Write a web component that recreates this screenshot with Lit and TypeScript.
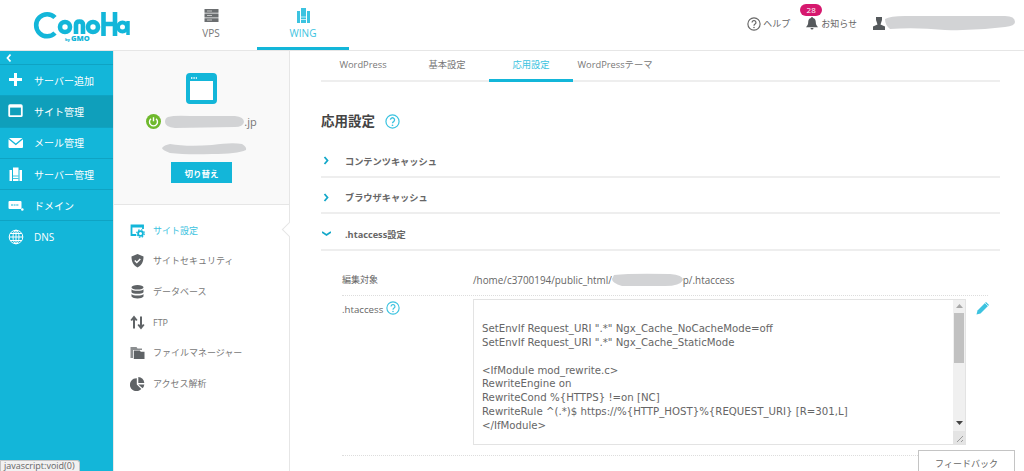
import { LitElement, html, css, svg } from "lit";
import { customElement } from "lit/decorators.js";

const blob = (w: number, h: number, d: string) => html`<svg class="blob" width=${w} height=${h} viewBox="0 0 ${w} ${h}"><path d=${d} fill="#d2d3d5"/></svg>`;

const helpIcon = (s: number, c: string) => html`<svg width=${s} height=${s} viewBox="0 0 16 16" fill="none"><circle cx="8" cy="8" r="7" stroke=${c} stroke-width="1.3"/><path d="M5.8 6.2a2.2 2.2 0 1 1 3.4 1.9c-.8.5-1.2.9-1.2 1.8" stroke=${c} stroke-width="1.4"/><circle cx="8" cy="12" r=".9" fill=${c}/></svg>`;

const sideItems = [
  { t: "サーバー追加", i: svg`<path d="M6 1h3v5h5v3H9v5H6V9H1V6h5z" fill="#fff"/>` },
  { t: "サイト管理", active: true, i: svg`<rect x="1.2" y="2.2" width="12.6" height="11" rx=".8" fill="none" stroke="#fff" stroke-width="1.8"/><rect x="1" y="2" width="13" height="2.6" fill="#fff"/>` },
  { t: "メール管理", i: svg`<path d="M1 3h13.5L7.8 8.5zM.5 4.2l7.3 6 7.2-6V12a1 1 0 0 1-1 1H1.500a1 1 0 0 1-1-1z" fill="#fff"/>` },
  { t: "サーバー管理", i: svg`<path d="M5 1.500h5.500V15H5zM1.500 4H4v11H1.500zM11.500 4H14v11h-2.500z" fill="#fff"/><path d="M5 10h5.500M5 12.500h5.500" stroke="#13b6d9" stroke-width=".8"/>` },
  { t: "ドメイン", i: svg`<rect x=".5" y="4" width="13" height="8" rx="1" fill="#fff"/><circle cx="14.300" cy="12.500" r="1.300" fill="#fff"/><path d="M3 8h8" stroke="#13b6d9" stroke-width="1.200" stroke-dasharray="2 .6"/>` },
  { t: "DNS", i: svg`<g fill="none" stroke="#fff" stroke-width="1"><circle cx="8" cy="8" r="6.800"/><ellipse cx="8" cy="8" rx="3" ry="6.800"/><path d="M8 1.200v13.600M1.200 8h13.600M2.200 4.500h11.600M2.200 11.500h11.600"/></g>` },
];

const g = "#5f6366";
const menu = [
  { t: "サイト設定", active: true, i: svg`<path d="M6 12H1.500V2.500h11.500V6" fill="none" stroke="#13b6d9" stroke-width="1.800"/><rect x="1" y="2" width="12.500" height="2.500" fill="#13b6d9"/><circle cx="10.500" cy="10.500" r="2.400" fill="none" stroke="#13b6d9" stroke-width="1.800"/><circle cx="10.500" cy="10.500" r="3.800" fill="none" stroke="#13b6d9" stroke-width="1.200" stroke-dasharray="1.500 1.500"/>` },
  { t: "サイトセキュリティ", i: svg`<path d="M7.500 1l6 2.500c0 5-1.500 8.500-6 11-4.500-2.500-6-6-6-11z" fill="${g}"/><path d="M4.800 7.500l2 2 3.500-3.500" fill="none" stroke="#fff" stroke-width="1.500"/>` },
  { t: "データベース", i: svg`<ellipse cx="7.500" cy="3.300" rx="6" ry="2.300" fill="${g}"/><path d="M1.500 5.200c1.500 2 10.500 2 12 0v3c-1.500 2-10.500 2-12 0zM1.500 10c1.500 2 10.500 2 12 0v2.500c-1.500 2.500-10.500 2.500-12 0z" fill="${g}"/>` },
  { t: "FTP", i: svg`<path d="M4 13.500V3M1.200 5.500L4 2l2.800 3.500M11 1.500V12M8.200 9.500L11 13l2.800-3.500" fill="none" stroke="${g}" stroke-width="2"/>` },
  { t: "ファイルマネージャー", i: svg`<path d="M.5 2h6l1 1.500H12V5H3v8H.5z" fill="#8b8e90"/><path d="M3.800 5.500h6l1 1.300h3.700V14H3.800z" fill="${g}"/>` },
  { t: "アクセス解析", i: svg`<path d="M6.800 2.200v6.300l4.500 4.500A6.500 6.500 0 1 1 6.800 2.200z" fill="${g}"/><path d="M8.300 1a6.300 6.300 0 0 1 6 6H8.300z" fill="${g}"/><path d="M8.300 8.500h6a6.300 6.300 0 0 1-1.800 3.800z" fill="${g}"/>` },
];

@customElement("app-root")
export class AppRoot extends LitElement {
  static styles = css`
    :host { display: block; width: 1024px; height: 471px; overflow: hidden; position: relative; background: #fff;
      font-family: "Open Sans", "Noto Sans CJK JP", sans-serif; color: #666; font-size: 10px; }
    svg { display: block; flex: none; }
    .hdr { height: 51px; box-sizing: border-box; border-bottom: 1px solid #e6e6e6; display: flex; align-items: stretch; }
    .logo { margin: 10px 0 0 33px; width: 97px; height: 34px; }
    .topnav { display: flex; margin-left: 35px; }
    .tn { width: 92px; height: 50px; box-sizing: border-box; display: flex; flex-direction: column; align-items: center; padding-top: 8px; gap: 3px; font-size: 10px; color: #777; }
    .tn.on { color: #3cc3e0; border-bottom: 3px solid #13b6d9; }
    .right { margin-left: auto; display: flex; align-items: center; padding: 0 9px 3px 0; position: relative; }
    .right span { font-size: 9px; color: #666; }
    .help { display: flex; align-items: center; gap: 2px; margin-right: 16px; }
    .bell { display: flex; align-items: center; gap: 3px; margin-right: 16px; position: relative; }
    .right .badge { position: absolute; left: -6px; top: -13px; width: 22px; height: 12px; border-radius: 6px; background: #d6186e; color: #fff; font-size: 8px; line-height: 12px; text-align: center; }
    .user { display: flex; align-items: center; }
    .body { display: flex; height: 420px; }
    .side { width: 114px; box-sizing: border-box; background: #13b6d9; border-right: 1px solid #e8e8e8; flex: none; color: #fff; }
    .collapse { height: 14px; box-sizing: border-box; border-bottom: 1px solid #0fa3c3; padding: 2px 0 0 6px; }
    .si { height: 31.300px; box-sizing: border-box; border-bottom: 1px solid #0fa3c3; display: flex; align-items: center; padding-left: 8px; gap: 10px; font-size: 10px; color: #fff; }
    .si.on { background: #0f9fbb; }
    .si svg { width: 16px; height: 16px; }
    .si.last { border-bottom: none; }
    .panel { width: 176px; box-sizing: border-box; flex: none; border-right: 1px solid #e6e6e6; position: relative; }
    .ptop { height: 154px; background: #f9f9f9; border-bottom: 1px solid #e6e6e6; display: flex; flex-direction: column; align-items: center; padding-top: 22px; box-sizing: border-box; }
    .sitename { display: flex; align-items: center; margin-top: 10px; font-size: 11px; color: #777; height: 15px; }
    .sitename .blob { margin: 0 0 0 4px; }
    .blob2 { margin: 13px 0 0 5px; }
    .sw { margin-top: 7px; width: 61px; height: 21px; background: #13b6d9; color: #fff; font-size: 8.500px; font-weight: 700; display: flex; align-items: center; justify-content: center; }
    .menu { padding: 10px 0 0 16px; }
    .mi { height: 30.600px; display: flex; align-items: center; gap: 8px; font-size: 9px; color: #777; }
    .mi.on { color: #3cc3e0; }
    .mi svg { width: 15px; height: 15px; }
    .caret { position: absolute; right: -6px; top: 173px; width: 11px; height: 11px; box-sizing: border-box; background: #fff; border-left: 1px solid #e6e6e6; border-bottom: 1px solid #e6e6e6; transform: rotate(45deg); }
    .main { flex: 1; padding: 0 24px 0 31px; min-width: 0; }
    .tabs { display: flex; height: 31px; box-sizing: border-box; border-bottom: 2px solid #eee; }
    .tab { width: 84px; height: 31px; flex: none; box-sizing: border-box; text-align: center; line-height: 28px; font-size: 9.300px; color: #777; white-space: nowrap; }
    .tab.on { color: #3cc3e0; border-bottom: 3px solid #13b6d9; }
    h2 { margin: 29px 0 0; font-size: 13.500px; line-height: 20px; height: 20px; font-weight: 700; color: #444; display: flex; align-items: center; gap: 10px; }
    .acc { margin-top: 10px; }
    .ai { height: 36.500px; box-sizing: border-box; border-bottom: 2px solid #eee; display: flex; align-items: center; font-size: 9.200px; font-weight: 700; color: #666; padding-top: 5px; }
    .ai svg { width: 9px; height: 9px; margin: 0 0 0 1px; }
    .ai .lab { margin-left: 14px; }
    .rows { padding: 0 12px 0 21px; }
    .r1 { display: flex; height: 45px; box-sizing: border-box; border-bottom: 1px dotted #ddd; line-height: 14px; align-items: flex-end; padding-bottom: 8px; font-size: 9.900px; }
    .lbl { width: 131px; flex: none; font-size: 9px; }
    .path { display: flex; align-items: center; }
    .r2 { display: flex; padding-top: 3px; height: 160px; box-sizing: border-box; border-bottom: 1px dotted #ddd; position: relative; }
    .lbl2 { width: 131px; flex: none; display: flex; align-items: center; height: 16px; gap: 3px; font-size: 9.700px; margin-top: 3px; }
    .lbl2 svg { margin-top: -4px; }
    .ta { width: 493px; height: 146px; box-sizing: border-box; border: 1px solid #e3e3e3; display: flex; background: #fff; flex: none; }
    .code { flex: 1; padding: 9px 8px 0 8px; font-family: "DejaVu Sans", sans-serif; font-size: 10.200px; line-height: 13.800px; white-space: pre; overflow: hidden; color: #666; }
    .sb { width: 12px; background: #f0f0f0; display: flex; flex-direction: column; align-items: center; flex: none; }
    .arrow { height: 12px; display: flex; align-items: center; }
    .arrow.down { margin-top: auto; margin-bottom: 2px; }
    .thumb { width: 10px; height: 50px; background: #c1c1c1; margin-top: 1px; }
    .corner { width: 12px; height: 13px; background: #e4e4e4; }
    .pen { margin: 2px 0 0 10px; }
    .fb { position: absolute; left: 918px; top: 450px; width: 97px; height: 21px; box-sizing: border-box; border: 1px solid #c4c4c4; border-bottom: none; background: #fff; font-size: 9px; text-align: center; line-height: 25px; color: #666; }
    .status { position: absolute; left: 0; top: 460px; height: 11px; box-sizing: border-box; padding: 0 4px 0 3px; background: #f1f1f1; border: 1px solid #c4c4c4; border-bottom: none; border-radius: 0 3px 0 0; font-size: 9px; line-height: 10px; color: #666; }
  `;

  render() {
    return html`
      <div class="hdr">
        <svg class="logo" viewBox="0 0 97 34">
          <g fill="none" stroke="#13b6d9" stroke-width="4.600">
            <path d="M22 7.500a11 11 0 1 0 0 15.500"/>
            <circle cx="32" cy="17" r="5"/>
            <path d="M43 24V15q0-3.500 3.500-3.500T50 15v9"/>
            <circle cx="60" cy="17" r="5"/>
            <path d="M70.500 2v24M82 2v24M70.500 14H82"/>
            <circle cx="89.500" cy="17" r="4.500" stroke-width="4"/>
            <path d="M95 11v14" stroke-width="3.500"/>
          </g>
          <text x="32" y="30.500" fill="#13b6d9" font-family="Open Sans" font-weight="800"><tspan font-size="4">by</tspan><tspan font-size="7.500" dx="1">GMO</tspan></text>
        </svg>
        <div class="topnav">
          <div class="tn">
            <svg width="15" height="15" viewBox="0 0 15 15"><path d="M.5 1h14v3.800H.5zM.5 5.600h14v3.800H.5zM.5 10.200h14V14H.5z" fill="#6b6e70"/><path d="M3 3h5M3 7.500h5M3 12h5" stroke="#fff" stroke-width=".6"/></svg>
            <span>VPS</span>
          </div>
          <div class="tn on">
            <svg width="15" height="15" viewBox="0 0 15 15"><path d="M5 0h5v15H5zM1 3h3v12H1zM11 3h3v12h-3z" fill="#3cc3e0"/><path d="M5 9h5M5 11.500h5" stroke="#fff" stroke-width=".7"/></svg>
            <span>WING</span>
          </div>
        </div>
        <div class="right">
          <div class="help">${helpIcon(14, "#666")}<span>ヘルプ</span></div>
          <div class="bell">
            <span class="badge">28</span>
            <svg width="12" height="13" viewBox="0 0 12 13"><path d="M6 0a1 1 0 0 1 1 1c2 .5 2.800 2.200 2.800 4.200 0 2 .8 3.500 2.200 5H0c1.400-1.500 2.200-3 2.200-5C2.200 3.200 3 1.500 5 1a1 1 0 0 1 1-1zM4.500 11h3a1.500 1.500 0 0 1-3 0z" fill="#55595c"/></svg>
            <span>お知らせ</span>
          </div>
          <div class="user">
            <svg width="12" height="13" viewBox="0 0 12 13"><path d="M3 0h6v3l-1.500 4.500 4.500 2V13H0V9.500l4.500-2L3 3z" fill="#55595c"/></svg>
            ${blob(130, 17, "M0 4 Q5 1 20 1 L120 1 Q130 1 130 7 Q130 11 120 12 Q90 16 60 15 Q30 12 5 14 Q0 10 0 4Z")}
          </div>
        </div>
      </div>
      <div class="body">
        <nav class="side">
          <div class="collapse"><svg width="6" height="10" viewBox="0 0 6 10"><path d="M4.500 1.500L1.500 5l3 3.500" fill="none" stroke="#fff" stroke-width="1.800"/></svg></div>
          ${sideItems.map((s, i) => html`<div class="si ${s.active ? "on" : ""} ${i === 5 ? "last" : ""}"><svg viewBox="0 0 16 16">${s.i}</svg><span>${s.t}</span></div>`)}
        </nav>
        <aside class="panel">
          <div class="ptop">
            <svg width="31" height="31" viewBox="0 0 31 31"><rect x="2" y="2" width="27" height="27" rx="2" fill="#fff" stroke="#13b6d9" stroke-width="4"/><rect x="2" y="2" width="27" height="6" fill="#13b6d9"/><path d="M5 5h6" stroke="#fff" stroke-width="1.400" stroke-dasharray="1.400 1"/></svg>
            <div class="sitename">
              <svg width="15" height="15" viewBox="0 0 15 15"><circle cx="7.500" cy="7.500" r="7.500" fill="#6fb92d"/><path d="M5 4.800a4 4 0 1 0 5 0M7.500 3.300v4" fill="none" stroke="#fff" stroke-width="1.400"/></svg>
              ${blob(79, 13, "M3 2 Q10 0 25 1 L70 1 Q79 2 79 7 Q78 12 70 12 L10 13 Q0 12 0 7 Q0 3 3 2Z")}<span>.jp</span>
            </div>
            <div class="blob2">${blob(85, 13, "M8 2 Q25 5 50 3 Q70 0 80 2 Q85 5 84 8 Q75 12 50 12 Q25 13 8 11 Q0 8 0 6 Q2 3 8 2Z")}</div>
            <div class="sw">切り替え</div>
          </div>
          <div class="menu">
            ${menu.map((m) => html`<div class="mi ${m.active ? "on" : ""}"><svg viewBox="0 0 15 15">${m.i}</svg><span>${m.t}</span></div>`)}
          </div>
          <div class="caret"></div>
        </aside>
        <main class="main">
          <div class="tabs">
            <div class="tab">WordPress</div>
            <div class="tab">基本設定</div>
            <div class="tab on">応用設定</div>
            <div class="tab">WordPressテーマ</div>
          </div>
          <h2>応用設定 ${helpIcon(15, "#3cc3e0")}</h2>
          <div class="acc">
            <div class="ai"><svg viewBox="0 0 9 9"><path d="M2.500 1l3 3.500-3 3.500" fill="none" stroke="#13a8c9" stroke-width="1.800"/></svg><span class="lab">コンテンツキャッシュ</span></div>
            <div class="ai"><svg viewBox="0 0 9 9"><path d="M2.500 1l3 3.500-3 3.500" fill="none" stroke="#13a8c9" stroke-width="1.800"/></svg><span class="lab">ブラウザキャッシュ</span></div>
            <div class="ai"><svg viewBox="0 0 9 9"><path d="M0 3l4.500 3L9 3" fill="none" stroke="#13a8c9" stroke-width="1.800"/></svg><span class="lab">.htaccess設定</span></div>
          </div>
          <div class="rows">
            <div class="r1">
              <div class="lbl">編集対象</div>
              <div class="path"><span>/home/c3700194/public_html/</span>${blob(71, 14, "M2 2 Q20 0 58 1 Q71 2 71 7 Q68 13 53 13 L10 13 Q0 10 0 6 Z")}<span>p/.htaccess</span></div>
            </div>
            <div class="r2">
              <div class="lbl2"><span>.htaccess</span>${helpIcon(14, "#3cc3e0")}</div>
              <div class="ta">
                <div class="code">
SetEnvIf Request_URI ".*" Ngx_Cache_NoCacheMode=off
SetEnvIf Request_URI ".*" Ngx_Cache_StaticMode

&lt;IfModule mod_rewrite.c&gt;
RewriteEngine on
RewriteCond %{HTTPS} !=on [NC]
RewriteRule ^(.*)$ https://%{HTTP_HOST}%{REQUEST_URI} [R=301,L]
&lt;/IfModule&gt;</div>
                <div class="sb">
                  <div class="arrow"><svg width="7" height="4" viewBox="0 0 7 4"><path d="M3.500 0L7 4H0z" fill="#a8a8a8"/></svg></div>
                  <div class="thumb"></div>
                  <div class="arrow down"><svg width="7" height="4" viewBox="0 0 7 4"><path d="M3.500 4L7 0H0z" fill="#444"/></svg></div>
                  <div class="corner"><svg width="12" height="13" viewBox="0 0 12 13"><path d="M4 11l6-6M8 11l2-2" stroke="#888" stroke-width=".8"/></svg></div>
                </div>
              </div>
              <svg class="pen" width="14" height="14" viewBox="0 0 14 14"><path d="M10 1l3 3-8.500 8.500L0.500 13.500l1-4z" fill="#3cc3e0"/><path d="M9 2l3 3" stroke="#fff" stroke-width=".7"/></svg>
            </div>
          </div>
        </main>
      </div>
      <div class="fb">フィードバック</div>
      <div class="status">javascript:void(0)</div>
    `;
  }
}
